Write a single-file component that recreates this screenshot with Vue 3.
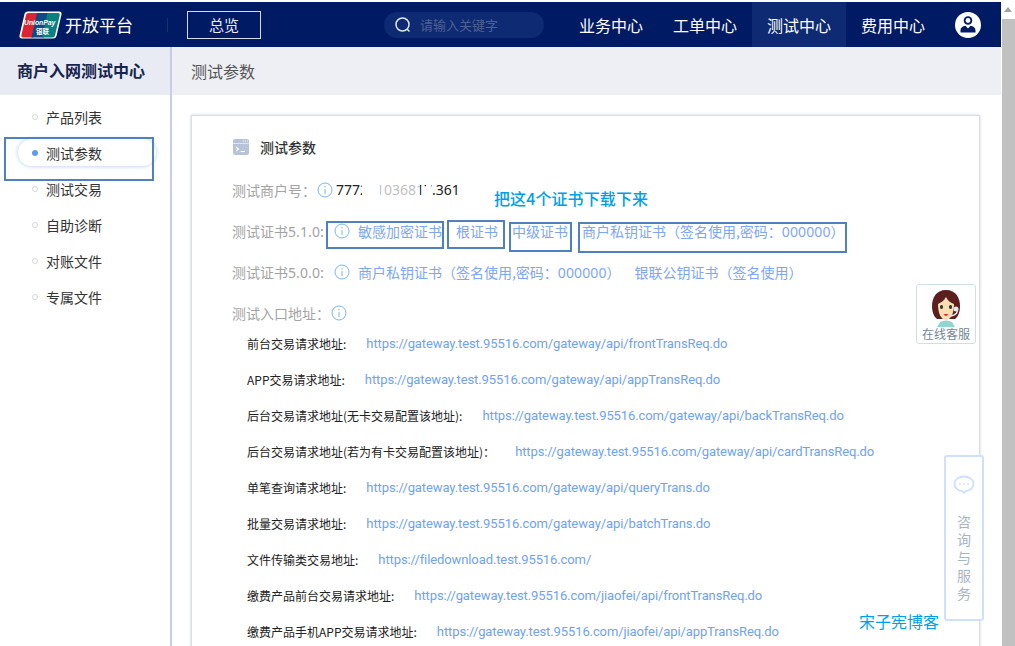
<template>
  <div class="page">
    <div class="viewport">
      <header class="topbar">
        <div class="brand">
          <svg class="brand__logo" width="43" height="28" viewBox="0 0 43 28">
            <path d="M9 .5h31q3 0 2.500 3l-5 21.500q-.6 2.500-3.500 2.500H3q-3 0-2.500-3l5-21.500Q6 .5 9 .5z" fill="#fff" />
            <path d="M9.500 2H20l-5.500 24.500H4q-2 0-1.700-2L7 4q.4-2 2.500-2z" fill="#dd2430" />
            <path d="M18 2h12.500L25 26.500H12.500z" fill="#0d4b87" />
            <path d="M28.500 2H39q2.200 0 1.800 2l-4.800 20.500q-.4 2-2.500 2H23z" fill="#0c7f80" />
            <text x="5" y="14" class="brand__logo-text">UnionPay</text>
            <text x="17" y="22.500" class="brand__logo-sub">银联</text>
          </svg>
          <span class="brand__name">开放平台</span>
        </div>
        <i class="topbar__sep"></i>
        <a class="overview">总览</a>
        <div class="search">
          <svg width="18" height="18" viewBox="0 0 18 18" fill="none" stroke="#dfe6f5" stroke-width="1.500">
            <circle cx="8.500" cy="8.500" r="6.500" />
            <path d="M13 13l2.500 2.500" />
          </svg>
          <span class="search__hint">请输入关键字</span>
        </div>
        <nav class="nav">
          <a v-for="item in navItems" :key="item" class="nav__item" :class="{ 'nav__item--active': item === '测试中心' }">{{ item }}</a>
        </nav>
        <svg class="user" width="26" height="26" viewBox="0 0 26 26">
          <circle cx="13" cy="13" r="13" fill="#fff" />
          <circle cx="13" cy="8.500" r="4.300" fill="#001a63" />
          <circle cx="13" cy="8.500" r="2.400" fill="#fff" />
          <path d="M5.500 20.500v-2c0-3 2.500-4.500 5-4.800l2.500 2.800 2.500-2.800c2.500.3 5 1.800 5 4.800v2z" fill="#001a63" />
        </svg>
      </header>

      <div class="layout">
        <aside class="side">
          <h2 class="side__title">商户入网测试中心</h2>
          <ul class="side__menu">
            <li v-for="item in menuItems" :key="item" class="side__item" :class="{ 'side__item--active': item === '测试参数' }">
              <i class="side__dot"></i>{{ item }}
            </li>
          </ul>
        </aside>

        <main class="main">
          <div class="main__head">测试参数</div>
          <section class="card">
            <div class="card__title">
              <svg width="16" height="16" viewBox="0 0 16 16">
                <rect width="16" height="16" rx="2" fill="#b7c3d8" />
                <path d="M0 4.500h16" stroke="#dfe5ef" stroke-width="1" />
                <path d="M3 8l2.500 2L3 12" fill="none" stroke="#fff" stroke-width="1.100" />
                <path d="M7.500 12.500H12" stroke="#fff" stroke-width="1.100" />
                <path d="M10 2h1M12 2h1M14 2h.8" stroke="#fff" stroke-width="1" />
              </svg>
              测试参数
            </div>

            <div class="info-row">
              <span class="info-row__label">测试商户号：</span>
              <svg class="tip" width="16" height="16" viewBox="0 0 16 16"><circle cx="8" cy="8" r="7" /><path d="M8 7v5M8 4v1.500" /></svg>
              <span class="merchant">777201036817.361<i class="merchant__mask merchant__mask--a"></i><i class="merchant__mask merchant__mask--b"></i><i class="merchant__mask merchant__mask--c"></i></span>
            </div>
            <div class="info-row">
              <span class="info-row__label">测试证书<span class="digits">5.1.0</span>:</span>
              <svg class="tip tip--cert" width="16" height="16" viewBox="0 0 16 16"><circle cx="8" cy="8" r="7" /><path d="M8 7v5M8 4v1.500" /></svg>
              <a class="link link--first">敏感加密证书</a>
              <a class="link link--gap">根证书</a>
              <a class="link link--gap">中级证书</a>
              <a class="link link--gap">商户私钥证书（签名使用,密码：<span class="digits">000000</span>）</a>
            </div>
            <div class="info-row">
              <span class="info-row__label">测试证书<span class="digits">5.0.0</span>:</span>
              <svg class="tip tip--cert" width="16" height="16" viewBox="0 0 16 16"><circle cx="8" cy="8" r="7" /><path d="M8 7v5M8 4v1.500" /></svg>
              <a class="link link--first">商户私钥证书（签名使用,密码：<span class="digits">000000</span>）</a>
              <a class="link link--wide">银联公钥证书（签名使用）</a>
            </div>
            <div class="info-row">
              <span class="info-row__label">测试入口地址：</span>
              <svg class="tip" width="16" height="16" viewBox="0 0 16 16"><circle cx="8" cy="8" r="7" /><path d="M8 7v5M8 4v1.500" /></svg>
            </div>

            <ul class="urls">
              <li v-for="row in urls" :key="row.label" class="urls__row">
                <span class="urls__label">{{ row.label }}</span>
                <a class="urls__link">{{ row.href }}</a>
              </li>
            </ul>
          </section>
        </main>
      </div>

      <!-- hand-drawn marks on the screenshot -->
      <i class="mark mark--nav"></i>
      <i class="mark mark--a"></i>
      <i class="mark mark--b"></i>
      <i class="mark mark--c"></i>
      <i class="mark mark--d"></i>
      <span class="note note--certs">把这4个证书下载下来</span>
      <span class="note note--blog">宋子宪博客</span>

      <div class="kefu">
        <svg width="34" height="38" viewBox="0 0 34 38">
          <path d="M11 33q6-3 12 0l3 5H8z" fill="#8fd6cf" />
          <path d="M17 1C7 1 3 9 3 17c0 6 2 11 5 13h18c3-2 5-7 5-13 0-8-4-16-14-16z" fill="#5a1f1e" />
          <path d="M17 8c-2 4-6 6-8 7 0 9 3 16 8 16s8-7 8-16c-3-1-6-3-8-7z" fill="#f8dfb4" />
          <ellipse cx="12.500" cy="18" rx="1.600" ry="1.900" fill="#333" />
          <ellipse cx="21.500" cy="18" rx="1.600" ry="1.900" fill="#333" />
          <path d="M14.500 25.500q2.500-1 5 0-2.500 2.500-5 0z" fill="#e01020" />
          <path d="M28 20q2 5-6 7" fill="none" stroke="#eceff2" stroke-width="1.500" />
          <circle cx="27" cy="20" r="2.500" fill="#e6e9ee" />
        </svg>
        <span class="kefu__text">在线客服</span>
      </div>

      <div class="consult">
        <svg width="22" height="20" viewBox="0 0 22 20">
          <path d="M11 1.500c5.500 0 9.500 3.300 9.500 7.200s-4 7.200-7.500 7.200L11 18l-2-2.100c-4.500 0-7.500-3.300-7.500-7.200S5.500 1.500 11 1.500z" fill="#fff" stroke="#cfe0ff" stroke-width="1.800" />
          <circle cx="7" cy="9" r="1" fill="#cfe0ff" />
          <circle cx="11" cy="9" r="1" fill="#cfe0ff" />
          <circle cx="15" cy="9" r="1" fill="#cfe0ff" />
        </svg>
        <span class="consult__text">咨询与服务</span>
      </div>
    </div>

    <div class="scroll">
      <i class="scroll__arrow"></i>
      <i class="scroll__thumb"></i>
    </div>
  </div>
</template>

<script setup>
const navItems = ['业务中心', '工单中心', '测试中心', '费用中心']
const menuItems = ['产品列表', '测试参数', '测试交易', '自助诊断', '对账文件', '专属文件']

const urls = [
  { label: '前台交易请求地址:', href: 'https://gateway.test.95516.com/gateway/api/frontTransReq.do' },
  { label: 'APP交易请求地址:', href: 'https://gateway.test.95516.com/gateway/api/appTransReq.do' },
  { label: '后台交易请求地址(无卡交易配置该地址):', href: 'https://gateway.test.95516.com/gateway/api/backTransReq.do' },
  { label: '后台交易请求地址(若为有卡交易配置该地址)：', href: 'https://gateway.test.95516.com/gateway/api/cardTransReq.do' },
  { label: '单笔查询请求地址:', href: 'https://gateway.test.95516.com/gateway/api/queryTrans.do' },
  { label: '批量交易请求地址:', href: 'https://gateway.test.95516.com/gateway/api/batchTrans.do' },
  { label: '文件传输类交易地址:', href: 'https://filedownload.test.95516.com/' },
  { label: '缴费产品前台交易请求地址:', href: 'https://gateway.test.95516.com/jiaofei/api/frontTransReq.do' },
  { label: '缴费产品手机APP交易请求地址:', href: 'https://gateway.test.95516.com/jiaofei/api/appTransReq.do' }
]
</script>

<style>
html,
body {
  margin: 0;
  overflow: hidden;
  background: #fff;
}
</style>

<style scoped>
.page {
  display: flex;
  width: 1015px;
  height: 646px;
  overflow: hidden;
  font-family: "Noto Sans CJK SC", "Noto Sans", sans-serif;
  color: #333;
}

.viewport {
  position: relative;
  flex: none;
  width: 1001px;
  height: 646px;
  padding-top: 2px;
  box-sizing: border-box;
  overflow: hidden;
}

.topbar {
  display: flex;
  align-items: center;
  height: 45px;
  padding-left: 19px;
  background: #001a63;
}

.brand {
  display: flex;
  align-items: center;
  width: 148px;
}

.brand__logo {
  margin-right: 3px;
}

.brand__logo-text {
  font: italic 700 6.800px "Liberation Sans", sans-serif;
  fill: #fff;
}

.brand__logo-sub {
  font: 700 6.500px "Noto Sans CJK SC", sans-serif;
  fill: #fff;
}

.brand__name {
  font-size: 17px;
  line-height: 24px;
  color: #fff;
  white-space: nowrap;
}

.topbar__sep {
  width: 1px;
  height: 14px;
  background: #1a3274;
}

.overview {
  width: 72px;
  height: 26px;
  margin-left: 19px;
  border: 1px solid #d7dcea;
  font-size: 15px;
  line-height: 26px;
  text-align: center;
  color: #e8ecf6;
}

.search {
  display: flex;
  align-items: center;
  width: 160px;
  height: 26px;
  margin-left: 123px;
  padding-left: 10px;
  box-sizing: border-box;
  border-radius: 13px;
  background: #0e2a72;
}

.search__hint {
  margin-left: 8px;
  font-size: 13px;
  color: #4f6094;
}

.nav {
  display: flex;
  align-self: stretch;
  margin-left: 20px;
}

.nav__item {
  padding: 0 15px;
  font-size: 16px;
  line-height: 47px;
  height: 45px;
  color: #fff;
}

.nav__item--active {
  background: #0e2a72;
}

.user {
  margin-left: 15px;
}

.layout {
  display: flex;
  height: 599px;
}

.side {
  width: 170px;
  flex: none;
  border-right: 2px solid #c9cce8;
}

.side__title {
  height: 48px;
  margin: 0;
  padding-left: 17px;
  background: #e8ebf3;
  font-size: 16px;
  font-weight: 700;
  line-height: 47px;
  color: #16244f;
}

.side__menu {
  margin: 8px 0 0;
  padding: 0;
  list-style: none;
}

.side__item {
  display: flex;
  align-items: center;
  height: 27px;
  margin: 0 14px 9px 18px;
  padding-left: 14px;
  border-radius: 14px;
  font-size: 14px;
  color: #333;
}

.side__item--active {
  box-shadow: 0 0 4px #a9c8f5;
}

.side__dot {
  width: 4px;
  height: 4px;
  margin-right: 8px;
  border: 1px solid #d4d6da;
  border-radius: 50%;
}

.side__item--active .side__dot {
  width: 6px;
  height: 6px;
  border: 0;
  background: #5d9cf0;
}

.main {
  flex: 1;
  min-width: 0;
}

.main__head {
  height: 48px;
  padding-left: 19px;
  background: #eeeff4;
  font-size: 16px;
  line-height: 48px;
  color: #555;
}

.card {
  width: 789px;
  height: 700px;
  margin: 20px 0 0 19px;
  padding: 21px 0 0 40px;
  box-sizing: border-box;
  border: 1px solid #dcdde2;
  box-shadow: 0 0 3px #d0d2dc;
}

.card__title {
  display: flex;
  align-items: center;
  gap: 11px;
  height: 20px;
  margin-bottom: 12px;
  padding-left: 1px;
  font-size: 14px;
  font-weight: 500;
  color: #333;
}

.info-row {
  display: flex;
  align-items: center;
  height: 41px;
  font-size: 14px;
  color: #a3a3a3;
  white-space: nowrap;
}

.digits {
  font-family: "Noto Sans", sans-serif;
  letter-spacing: 0.1px;
}

.tip {
  flex: none;
  margin-left: 1px;
  fill: none;
  stroke: #7cb6ea;
  stroke-width: 1;
}

.tip--cert {
  margin-left: 10px;
}

.merchant {
  position: relative;
  margin-left: 3px;
  font-family: "Noto Sans", sans-serif;
  color: #222;
}

.merchant__mask {
  position: absolute;
  top: 0;
  bottom: 0;
  background: #fff;
}

.merchant__mask--a {
  left: 26px;
  width: 18px;
}

.merchant__mask--b {
  left: 44px;
  width: 40px;
  opacity: 0.7;
}

.merchant__mask--c {
  left: 90px;
  width: 5px;
}

.link {
  color: #7ea6f4;
}

.link--first {
  margin-left: 8px;
}

.link--gap {
  margin-left: 14px;
}

.link--wide {
  margin-left: 14px;
}

.urls {
  display: flex;
  flex-direction: column;
  gap: 18px;
  margin: 1px 0 0;
  padding: 0 0 0 15px;
  list-style: none;
}

.urls__row {
  display: flex;
  align-items: center;
  gap: 20px;
  height: 18px;
  white-space: nowrap;
}

.urls__label {
  font-size: 12px;
  color: #222;
}

.urls__link {
  font-family: Roboto, sans-serif;
  font-size: 13px;
  letter-spacing: -0.1px;
  color: #6ea2f5;
}

.mark {
  position: absolute;
  box-sizing: border-box;
  border: 2px solid #4f81bd;
}

.mark--nav {
  left: 4px;
  top: 137px;
  width: 150px;
  height: 44px;
}

.mark--a {
  left: 326px;
  top: 221px;
  width: 118px;
  height: 28px;
}

.mark--b {
  left: 447px;
  top: 220px;
  width: 58px;
  height: 29px;
}

.mark--c {
  left: 509px;
  top: 222px;
  width: 63px;
  height: 30px;
}

.mark--d {
  left: 578px;
  top: 222px;
  width: 269px;
  height: 31px;
}

.note {
  position: absolute;
  font-size: 16px;
  line-height: 20px;
  color: #00a0e9;
  white-space: nowrap;
}

.note--certs {
  left: 494px;
  top: 188px;
  font-weight: 500;
  letter-spacing: 0.1px;
}

.note--blog {
  left: 859px;
  top: 611px;
}

.kefu {
  position: absolute;
  left: 916px;
  top: 284px;
  display: flex;
  flex-direction: column;
  align-items: center;
  width: 60px;
  height: 60px;
  padding-top: 4px;
  box-sizing: border-box;
  border: 1px solid #cfdfe5;
  border-radius: 3px;
  background: #fff;
}

.kefu__text {
  font-size: 12px;
  line-height: 14px;
  color: #6f8794;
}

.consult {
  position: absolute;
  left: 944px;
  top: 455px;
  display: flex;
  flex-direction: column;
  align-items: center;
  width: 40px;
  height: 166px;
  padding-top: 18px;
  box-sizing: border-box;
  border: 2px solid #cfe0ff;
  border-radius: 3px;
  background: #fff;
}

.consult__text {
  width: 14px;
  margin-top: 17px;
  font-size: 14px;
  line-height: 18px;
  text-align: center;
  color: #aab3c6;
}

.scroll {
  position: relative;
  flex: none;
  width: 14px;
  background: #fff;
}

.scroll__arrow {
  position: absolute;
  left: 3px;
  top: 7px;
  border: 4px solid transparent;
  border-top: 0;
  border-bottom: 5px solid #a3a3a3;
}

.scroll__thumb {
  position: absolute;
  left: 1px;
  right: 0;
  top: 19px;
  bottom: 0;
  background: #c1c1c1;
}
</style>
